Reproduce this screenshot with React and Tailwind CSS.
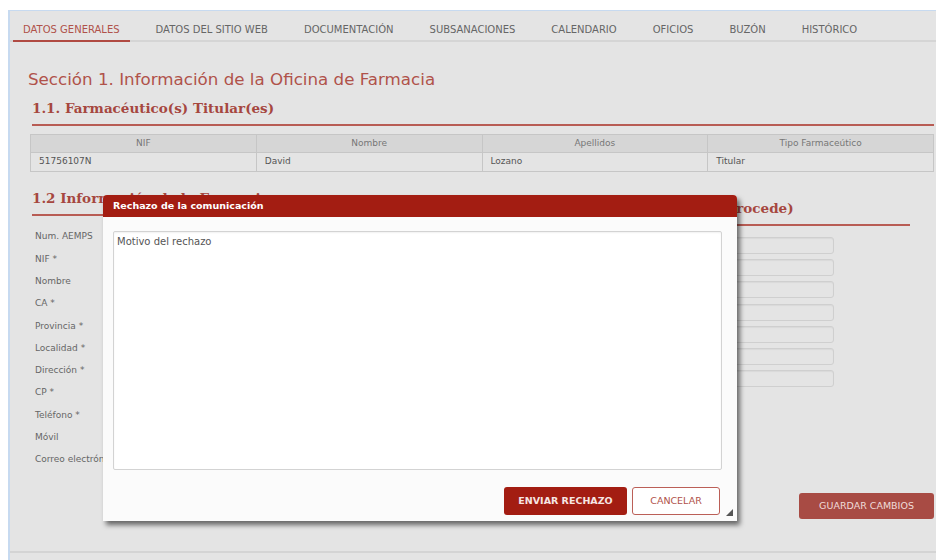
const tabs = [
  "DATOS GENERALES",
  "DATOS DEL SITIO WEB",
  "DOCUMENTACIÓN",
  "SUBSANACIONES",
  "CALENDARIO",
  "OFICIOS",
  "BUZÓN",
  "HISTÓRICO",
];

const farmaciaFields = [
  "Num. AEMPS",
  "NIF *",
  "Nombre",
  "CA *",
  "Provincia *",
  "Localidad *",
  "Dirección *",
  "CP *",
  "Teléfono *",
  "Móvil",
  "Correo electrónico *",
];

const representanteFields = ["NIF", "Nombre", "Apellidos", "Teléfono", "Móvil", "Correo electrónico", "Nº Colegiado"];

function Heading({ children }) {
  return (
    <h2 className="ml-[2px] border-b-2 border-[#b85c54] pb-[6px] font-['DejaVu_Serif',serif] text-[13.5px] font-bold leading-[20px] text-[#a6473f]">
      {children}
    </h2>
  );
}

function ResizeGrip() {
  return (
    <svg className="absolute bottom-[5px] right-[4px]" width="7" height="7" viewBox="0 0 7 7">
      <path d="M7 0 L7 7 L0 7 Z" fill="#555" />
    </svg>
  );
}

function RechazoDialog() {
  return (
    <div className="absolute left-[103px] top-[195px] flex h-[326px] w-[634px] flex-col rounded-t-[4px] bg-[#fbfbfb] shadow-[3px_4px_5px_rgba(0,0,0,0.55)]">
      <div className="flex h-[22px] items-center rounded-t-[4px] bg-[#a31d12] pl-[10px] text-[9.5px] font-bold text-white">
        Rechazo de la comunicación
      </div>
      <textarea
        className="ml-[10px] mt-[14px] h-[239px] w-[609px] resize-none rounded-[2px] border border-[#d3d3d3] bg-white px-[3px] py-[2px] text-[10px] text-[#555] shadow-[inset_0_1px_2px_rgba(0,0,0,0.06)] outline-none placeholder:text-[#555]"
        placeholder="Motivo del rechazo"
      />
      <div className="mt-[17px] flex justify-end gap-[5px] pr-[17px]">
        <button className="h-[28px] w-[123px] rounded-[3px] bg-[#a31d12] text-[9.5px] font-semibold text-[#f6e6e4]">
          ENVIAR RECHAZO
        </button>
        <button className="h-[28px] w-[88px] rounded-[3px] border border-[#bb5f57] bg-white text-[9.5px] text-[#b0524a]">
          CANCELAR
        </button>
      </div>
      <ResizeGrip />
    </div>
  );
}

export default function App() {
  return (
    <div className="relative h-[560px] w-[936px] overflow-hidden bg-white pt-[10px] font-['DejaVu_Sans',sans-serif]">
      <div className="ml-[8px] flex h-[550px] flex-col border-l-2 border-t border-[#c7daf0] bg-[#e4e4e4]">
        <nav className="flex border-b-2 border-[#d5d5d5] pl-[3px]">
          {tabs.map((tab, i) => (
            <div
              key={tab}
              className={
                i === 0
                  ? "-mb-[2px] mr-[16px] border-b-2 border-[#b04a42] px-[10px] pb-[4px] pt-[13px] text-[10px] leading-[12px] text-[#b0524a]"
                  : "mr-[16px] px-[10px] pb-[4px] pt-[13px] text-[10px] leading-[12px] text-[#666]"
              }
            >
              {tab}
            </div>
          ))}
        </nav>

        <div className="pl-[20px] pr-[2px]">
          <h1 className="-ml-[2px] mt-[24px] text-[16.7px] leading-[26px] text-[#b0524a]">
            Sección 1. Información de la Oficina de Farmacia
          </h1>

          <div className="mt-[6px]">
            <Heading>1.1. Farmacéutico(s) Titular(es)</Heading>
          </div>

          <table className="mt-[8px] w-full border-collapse text-[9px]">
            <thead>
              <tr className="h-[18px] bg-[#d6d6d6] text-[#777]">
                <th className="w-1/4 border border-[#c6c6c6] font-normal">NIF</th>
                <th className="w-1/4 border border-[#c6c6c6] font-normal">Nombre</th>
                <th className="w-1/4 border border-[#c6c6c6] font-normal">Apellidos</th>
                <th className="w-1/4 border border-[#c6c6c6] font-normal">Tipo Farmaceútico</th>
              </tr>
            </thead>
            <tbody>
              <tr className="h-[19px] text-[#555]">
                <td className="border border-[#c6c6c6] pl-[8px]">51756107N</td>
                <td className="border border-[#c6c6c6] pl-[8px]">David</td>
                <td className="border border-[#c6c6c6] pl-[8px]">Lozano</td>
                <td className="border border-[#c6c6c6] pl-[8px]">Titular</td>
              </tr>
            </tbody>
          </table>

          <div className="mt-[16px] grid grid-cols-[452px_1fr] gap-[10px] pr-[24px]">
            <section>
              <Heading>1.2 Información de la Farmacia</Heading>
              <div className="mt-[10px]">
                {farmaciaFields.map((label) => (
                  <div key={label} className="flex h-[22.3px] items-center pl-[5px] text-[9px] text-[#666]">
                    <span className="w-[140px]">{label}</span>
                    <div className="h-[17px] w-[260px] rounded-[3px] border border-[#cfcfcf]" />
                  </div>
                ))}
              </div>
            </section>

            <section className="mt-[10px]">
              <Heading>1.3 Representantes legales (si procede)</Heading>
              <div className="mt-[8px]">
                {representanteFields.map((label) => (
                  <div key={label} className="flex h-[22.3px] items-center pl-[5px] text-[9px] text-[#666]">
                    <span className="w-[137px]">{label}</span>
                    <div className="h-[17px] w-[200px] rounded-[3px] border border-[#cfcfcf] shadow-[inset_0_1px_1px_rgba(0,0,0,0.05)]" />
                  </div>
                ))}
              </div>
            </section>
          </div>

          <div className="mt-[22px] flex justify-end">
            <button className="h-[26px] w-[135px] rounded-[3px] bg-[#a84b44] text-[9.5px] text-[#f0dcd9]">
              GUARDAR CAMBIOS
            </button>
          </div>
        </div>

        <div className="mt-auto h-[9px] border-t-2 border-[#d4d4d4]" />
      </div>

      <RechazoDialog />
    </div>
  );
}
